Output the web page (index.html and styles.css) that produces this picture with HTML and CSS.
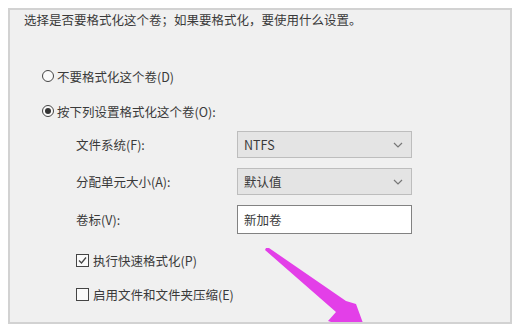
FILE: index.html
```html
<!DOCTYPE html>
<html lang="zh-CN">
<head>
    <meta charset="UTF-8">
    <title>格式化分区</title>
    <link rel="stylesheet" href="styles.css">
</head>
<body>
    <div class="panel">
        <p class="title">选择是否要格式化这个卷；如果要格式化，要使用什么设置。</p>

        <div class="option first">
            <span class="radio"></span>
            <span>不要格式化这个卷(D)</span>
        </div>
        <div class="option second">
            <span class="radio checked"></span>
            <span>按下列设置格式化这个卷(O):</span>
        </div>

        <div class="settings">
            <label>文件系统(F):</label>
            <div class="select">
                <span>NTFS</span>
                <svg width="10" height="6" viewBox="0 0 10 6"><path d="M1 1 L5 5 L9 1" fill="none" stroke="#777" stroke-width="1.2"/></svg>
            </div>
            <label>分配单元大小(A):</label>
            <div class="select">
                <span>默认值</span>
                <svg width="10" height="6" viewBox="0 0 10 6"><path d="M1 1 L5 5 L9 1" fill="none" stroke="#777" stroke-width="1.2"/></svg>
            </div>
            <label>卷标(V):</label>
            <div class="textbox">新加卷</div>
        </div>

        <div class="check first">
            <span class="box">
                <svg width="11" height="11" viewBox="0 0 11 11"><path d="M2 5.5 L4.5 8 L9 2.5" fill="none" stroke="#444" stroke-width="1.3"/></svg>
            </span>
            <span>执行快速格式化(P)</span>
        </div>
        <div class="check second">
            <span class="box"></span>
            <span>启用文件和文件夹压缩(E)</span>
        </div>

        <svg class="arrow" width="504" height="317" viewBox="10 10 504 317">
            <polygon points="266,248 269,248 346,301 356,304 367,334 328,321 336,312 265,250" fill="#e33fe8"/>
        </svg>
    </div>
</body>
</html>
```

FILE: styles.css
```css
body
{
    margin: 0;
    background: #ffffff;
    font-family: "Noto Sans CJK SC", "Noto Sans", sans-serif;
    font-size: 12.5px;
    color: #3a3a3a;
}
.panel
{
    position: relative;
    overflow: hidden;
    margin: 8px 0 0 8px;
    width: 486px;
    height: 312px;
    padding: 0 0 0 14px;
    border: 2px solid #d2d2d2;
    background: #f0f0f0;
}
.title
{
    margin: 1px 0 0 0;
    line-height: 18px;
}
.option
{
    display: flex;
    align-items: center;
    gap: 3px;
    height: 18px;
    margin-left: 18px;
}
.option.first { margin-top: 38px; }
.option.second { margin-top: 17px; }
.radio
{
    width: 10px;
    height: 10px;
    border: 1px solid #444;
    border-radius: 50%;
    background: #fafafa;
    display: flex;
    align-items: center;
    justify-content: center;
}
.radio.checked::after
{
    content: "";
    width: 6px;
    height: 6px;
    border-radius: 50%;
    background: #333;
}
.settings
{
    display: grid;
    grid-template-columns: 161px 175px;
    grid-template-rows: 27px 27px 29px;
    row-gap: 10px;
    align-items: center;
    margin: 11px 0 0 52px;
}
.select, .textbox
{
    height: 100%;
    box-sizing: border-box;
    display: flex;
    align-items: center;
    justify-content: space-between;
    padding: 0 8px 0 6px;
}
.select
{
    background: #e4e4e4;
    border: 1px solid #bdbdbd;
}
.textbox
{
    background: #ffffff;
    border: 1px solid #828282;
}
.check
{
    display: flex;
    align-items: center;
    gap: 4px;
    height: 18px;
    margin-left: 52px;
}
.check.first { margin-top: 17px; }
.check.second { margin-top: 16px; }
.box
{
    width: 11px;
    height: 11px;
    border: 1px solid #444;
    background: #fafafa;
    display: flex;
}
.arrow
{
    position: absolute;
    left: 0;
    top: 0;
    filter: blur(0.6px);
}
```
